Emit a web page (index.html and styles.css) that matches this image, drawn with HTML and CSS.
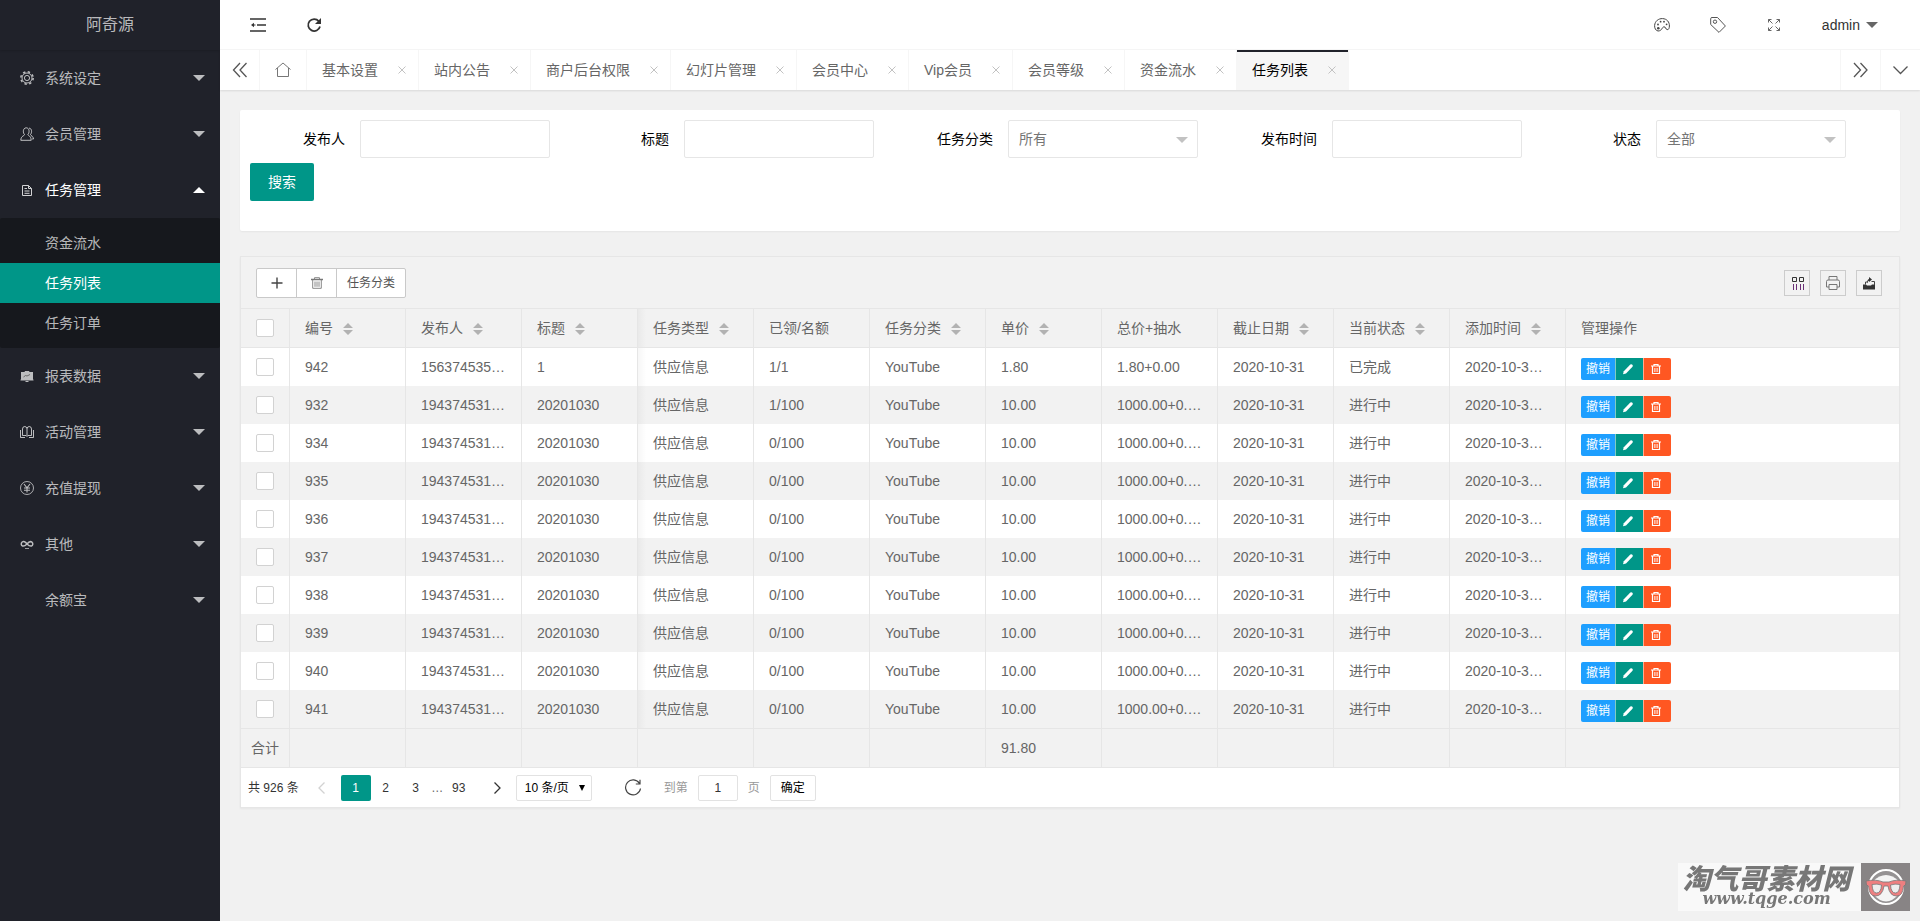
FILE: index.html
```html
<!DOCTYPE html>
<html lang="zh-CN">
<head>
<meta charset="utf-8">
<title>任务列表</title>
<link rel="stylesheet" href="styles.css">
</head>
<body>
<svg class="sprite" aria-hidden="true">
  <symbol id="i-edit" viewBox="0 0 12 12"><path d="M1 11.300 1.800 8.300 8.300 1.600Q9.500.9 10.400 1.700 11.300 2.700 10.500 3.800L4 10.400Z" fill="currentColor"/></symbol>
  <symbol id="i-trash" viewBox="0 0 12 12"><path d="M1 3h10M4 2.800V1.500h4v1.300M2.500 3.200V10.500h7V3.200" fill="none" stroke="currentColor" stroke-width="1.200"/><path d="M4.900 5v4M7.100 5v4" stroke="currentColor"/></symbol>
  <symbol id="i-close" viewBox="0 0 8 8"><path d="M.5.5l7 7M7.500.5l-7 7" fill="none" stroke="currentColor"/></symbol>
</svg>

<div class="app">
  <aside class="side">
    <div class="logo">阿奇源</div>
    <nav class="menu">
      <a class="menu-item" href="#"><svg class="menu-icon" viewBox="0 0 14 14"><g fill="none" stroke="currentColor"><circle cx="7" cy="7" r="2.600"/><circle cx="7" cy="7" r="5"/><circle cx="7" cy="7" r="6.200" stroke-width="1.500" stroke-dasharray="2.400 2.470"/></g></svg><span>系统设定</span><i class="caret"></i></a>
      <a class="menu-item" href="#"><svg class="menu-icon" viewBox="0 0 14 14"><g fill="none" stroke="currentColor"><path d="M4.500 7.500C2.800 6 2.700 1 6.200.8 9.800 1 9.600 6 7.900 7.500 8 9 11 8.500 11.200 13.300H.8C1 8.500 4.400 9.200 4.500 7.500Z"/><path d="M9 1.200c2.800-.2 3.300 4.300 1.500 6.300.3 1.500 2.800 1.500 3 4.500h-1.300"/></g></svg><span>会员管理</span><i class="caret"></i></a>
      <a class="menu-item open" href="#"><svg class="menu-icon dim" viewBox="0 0 14 14"><path d="M2.500 2.500h6l3 3v7h-9zM8.500 2.500v3h3M4.500 5.500h2.500M4.500 8h5M4.500 10.300h5" fill="none" stroke="currentColor"/></svg><span>任务管理</span><i class="caret up"></i></a>
      <div class="submenu">
        <a href="#">资金流水</a>
        <a class="active" href="#">任务列表</a>
        <a href="#">任务订单</a>
      </div>
      <a class="menu-item" href="#"><svg class="menu-icon" viewBox="0 0 14 14"><path d="M1 3h3.500L5 2h4l.5 1H13v7.500h.5v1H.5v-1H1z" fill="currentColor"/><path d="M3.500 8l2-1.500 1.500.5 3-1.500" fill="none" stroke="#555" stroke-width=".8"/><path d="M5.500 12.500h3" stroke="currentColor"/></svg><span>报表数据</span><i class="caret"></i></a>
      <a class="menu-item" href="#"><svg class="menu-icon" viewBox="0 0 14 14"><path d="M7 3.500Q6.500 1.500 4.800 1.500 2.500 1.500 2.500 4V10.500H6L7 11.500 8 10.500h3.500V4Q11.500 1.500 9.200 1.500 7.500 1.500 7 3.500ZM7 3.500v7.500M.5 5v7.500h4.500M13.500 5v7.500H9" fill="none" stroke="currentColor"/></svg><span>活动管理</span><i class="caret"></i></a>
      <a class="menu-item" href="#"><svg class="menu-icon" viewBox="0 0 14 14"><path d="M4 3l3 3.800L10 3M7 6.800V11.500M4 7h6M4 9.200h6" fill="none" stroke="currentColor" stroke-width="1.100"/><circle cx="7" cy="7" r="6.500" fill="none" stroke="currentColor" stroke-width=".9"/></svg><span>充值提现</span><i class="caret"></i></a>
      <a class="menu-item" href="#"><svg class="menu-icon" viewBox="0 0 14 14"><path d="M7 7C5.500 4.500 3.500 4 2.200 5 .8 6.200 1 8.500 2.500 9 4.500 9.500 5.500 8.500 7 7 8.500 5 10 4 11.800 5c1.500 1.200 1.200 3.500-.3 4C9.500 9.500 8.500 8.500 7 7Z" fill="none" stroke="currentColor" stroke-width="1.500"/><path d="M5 11.500h4" stroke="currentColor" stroke-width=".8"/></svg><span>其他</span><i class="caret"></i></a>
      <a class="menu-item" href="#"><span class="menu-icon"></span><span>余额宝</span><i class="caret"></i></a>
    </nav>
  </aside>

  <div class="main">
    <header class="topbar">
      <button class="top-btn" type="button" aria-label="侧边伸缩"><svg width="16" height="16" viewBox="0 0 16 16"><path d="M0 2h16M7 8h9M0 14h16" stroke="#333" stroke-width="1.600"/><path d="M1 8l3-2.200v4.400z" fill="#333"/><path d="M3 8h2.500" stroke="#333"/></svg></button>
      <button class="top-btn wide" type="button" aria-label="刷新"><svg width="16" height="16" viewBox="0 0 16 16"><path d="M12.800 4.200A6 6 0 1 0 14 9.500" fill="none" stroke="#333" stroke-width="1.800"/><path d="M15 1v6H9z" fill="#333"/></svg></button>
      <div class="top-right">
        <button class="top-icon" type="button" aria-label="主题"><svg width="16" height="16" viewBox="0 0 16 16"><path d="M4 14C1.500 13.500.5 11 .6 8.500 1 4 4.500 1.500 8.500 1.600c4.500.2 7 3.400 6.900 7.400 0 2-.8 4-2.200 3.600-2-.4-1.200-2.800-3.200-2.800-2.200.2-1.800 4.200-6 4.200Z" fill="none" stroke="#444"/><g fill="#444"><circle cx="4.300" cy="11.200" r="1.300"/><circle cx="4" cy="7.500" r=".9"/><circle cx="6.600" cy="4.700" r=".9"/><circle cx="10" cy="4.700" r=".9"/><circle cx="12.600" cy="7.300" r=".9"/></g></svg></button>
        <button class="top-icon" type="button" aria-label="便签"><svg width="16" height="16" viewBox="0 0 16 16"><path d="M.7 1.700Q.7.5 2 .5H7.500L15.400 9 9 15.400.7 7.500Z" fill="none" stroke="#555"/><circle cx="5" cy="4.700" r="1.700" fill="none" stroke="#555"/></svg></button>
        <button class="top-icon" type="button" aria-label="全屏"><svg width="16" height="16" viewBox="0 0 16 16"><path d="M2.500 5.500v-3h3M2.500 2.500l4 4M10.500 2.500h3v3M13.500 2.500l-4 4M2.500 10.500v3h3M2.500 13.500l4-4M10.500 13.500h3v-3M13.500 13.500l-4-4" fill="none" stroke="#666"/></svg></button>
        <button class="user" type="button">admin<i class="caret dark"></i></button>
      </div>
    </header>

    <div class="tabs">
      <button class="tab-ctrl" type="button" aria-label="向左"><svg width="16" height="16" viewBox="0 0 16 16"><path d="M8 1 1.500 8 8 15M14.500 1 8 8l6.500 7" fill="none" stroke="#555" stroke-width="1.300"/></svg></button>
      <a class="tab-home" href="#" aria-label="首页"><svg width="16" height="16" viewBox="0 0 16 16"><path d="M.5 7.500 8 1l7.500 6.500M2.500 6v8.500h11V6" fill="none" stroke="#777"/></svg></a>
      <div class="tab"><a href="#">基本设置</a><button type="button" aria-label="关闭"><svg><use href="#i-close"/></svg></button></div>
      <div class="tab"><a href="#">站内公告</a><button type="button" aria-label="关闭"><svg><use href="#i-close"/></svg></button></div>
      <div class="tab"><a href="#">商户后台权限</a><button type="button" aria-label="关闭"><svg><use href="#i-close"/></svg></button></div>
      <div class="tab"><a href="#">幻灯片管理</a><button type="button" aria-label="关闭"><svg><use href="#i-close"/></svg></button></div>
      <div class="tab"><a href="#">会员中心</a><button type="button" aria-label="关闭"><svg><use href="#i-close"/></svg></button></div>
      <div class="tab"><a href="#">Vip会员</a><button type="button" aria-label="关闭"><svg><use href="#i-close"/></svg></button></div>
      <div class="tab"><a href="#">会员等级</a><button type="button" aria-label="关闭"><svg><use href="#i-close"/></svg></button></div>
      <div class="tab"><a href="#">资金流水</a><button type="button" aria-label="关闭"><svg><use href="#i-close"/></svg></button></div>
      <div class="tab current"><a href="#">任务列表</a><button type="button" aria-label="关闭"><svg><use href="#i-close"/></svg></button></div>
      <div class="tab-end">
        <button class="tab-ctrl" type="button" aria-label="向右"><svg width="16" height="16" viewBox="0 0 16 16"><path d="M1 1l6.500 7L1 15M7.500 1 14 8l-6.500 7" fill="none" stroke="#555" stroke-width="1.300"/></svg></button>
        <button class="tab-ctrl" type="button" aria-label="更多"><svg width="16" height="16" viewBox="0 0 16 16"><path d="M.5 4.500l7 7 7-7" fill="none" stroke="#555" stroke-width="1.300"/></svg></button>
      </div>
    </div>

    <main class="content">
      <form class="search">
        <div class="field"><label for="f-user">发布人</label><input id="f-user" type="text"></div>
        <div class="field"><label for="f-title">标题</label><input id="f-title" type="text"></div>
        <div class="field"><label for="f-cat">任务分类</label><div class="select"><select id="f-cat"><option>所有</option></select></div></div>
        <div class="field"><label for="f-time">发布时间</label><input id="f-time" type="text"></div>
        <div class="field"><label for="f-state">状态</label><div class="select"><select id="f-state"><option>全部</option></select></div></div>
        <button class="btn-search" type="button">搜索</button>
      </form>

      <section class="panel">
        <div class="toolbar">
          <div class="btn-group">
            <button type="button" aria-label="添加"><svg width="14" height="14" viewBox="0 0 14 14"><path d="M7 1.500v11M1.500 7h11" stroke="#444" stroke-width="1.400"/></svg></button>
            <button type="button" aria-label="删除"><svg width="12" height="12" viewBox="0 0 12 12"><path d="M0 2.500h12" stroke="#777" stroke-width="1.500"/><path d="M3.500 2V.7h5V2M1.700 3v8.300h8.600V3M4 4.500v5.300M6 4.500v5.300M8 4.500v5.300" fill="none" stroke="#888"/></svg></button>
            <button type="button">任务分类</button>
          </div>
          <div class="tools">
            <button type="button" aria-label="筛选列"><svg width="16" height="16" viewBox="0 0 16 16"><path d="M3.500 2.500h4v4h-4zM10.500 2.500h4v4h-4z" fill="none" stroke="#333"/><path d="M4.500 9v6M7.500 9v6M11.500 9v6M14.500 9v6" stroke="#6a2f76"/></svg></button>
            <button type="button" aria-label="打印"><svg width="16" height="16" viewBox="0 0 16 16"><path d="M4 5V1.500h8V5M4 12H1.500V6.500Q1.500 5 3 5h10q1.500 0 1.500 1.500V12H12M4 9.500h8v5H4z" fill="none" stroke="#777"/></svg></button>
            <button type="button" aria-label="导出"><svg width="16" height="16" viewBox="0 0 16 16"><path d="M2 9.500h3l1 1h4l1-1h3v5H2z" fill="#333"/><path d="M4.500 9.500V7H7M10.500 6.500h3V10" fill="none" stroke="#444"/><path d="M6 8.500q0-4 2-4.500V2l3 2.500L8 7V5.800Q7 6 6 8.500Z" fill="#333"/></svg></button>
          </div>
        </div>

        <table class="grid">
          <colgroup><col class="c-check"><col span="11" class="c-data"><col></colgroup>
          <thead>
            <tr>
              <th class="check"><input type="checkbox" aria-label="全选"></th>
              <th>编号<i class="sort"></i></th><th>发布人<i class="sort"></i></th><th>标题<i class="sort"></i></th><th class="edge">任务类型<i class="sort"></i></th><th>已领/名额</th><th>任务分类<i class="sort"></i></th><th>单价<i class="sort"></i></th><th>总价+抽水</th><th>截止日期<i class="sort"></i></th><th>当前状态<i class="sort"></i></th><th>添加时间<i class="sort"></i></th><th>管理操作</th>
            </tr>
          </thead>
          <tbody>
            <tr><td class="check"><input type="checkbox" aria-label="选择 942"></td><td>942</td><td>156374535888</td><td>1</td><td class="edge">供应信息</td><td>1/1</td><td>YouTube</td><td>1.80</td><td>1.80+0.00</td><td>2020-10-31</td><td>已完成</td><td>2020-10-30 12:00</td><td class="ops"><div><button type="button">撤销</button><button type="button" aria-label="编辑"><svg><use href="#i-edit"/></svg></button><button type="button" aria-label="删除"><svg><use href="#i-trash"/></svg></button></div></td></tr>
            <tr><td class="check"><input type="checkbox" aria-label="选择 932"></td><td>932</td><td>194374531888</td><td>20201030</td><td class="edge">供应信息</td><td>1/100</td><td>YouTube</td><td>10.00</td><td>1000.00+0.00</td><td>2020-10-31</td><td>进行中</td><td>2020-10-30 12:00</td><td class="ops"><div><button type="button">撤销</button><button type="button" aria-label="编辑"><svg><use href="#i-edit"/></svg></button><button type="button" aria-label="删除"><svg><use href="#i-trash"/></svg></button></div></td></tr>
            <tr><td class="check"><input type="checkbox" aria-label="选择 934"></td><td>934</td><td>194374531888</td><td>20201030</td><td class="edge">供应信息</td><td>0/100</td><td>YouTube</td><td>10.00</td><td>1000.00+0.00</td><td>2020-10-31</td><td>进行中</td><td>2020-10-30 12:00</td><td class="ops"><div><button type="button">撤销</button><button type="button" aria-label="编辑"><svg><use href="#i-edit"/></svg></button><button type="button" aria-label="删除"><svg><use href="#i-trash"/></svg></button></div></td></tr>
            <tr><td class="check"><input type="checkbox" aria-label="选择 935"></td><td>935</td><td>194374531888</td><td>20201030</td><td class="edge">供应信息</td><td>0/100</td><td>YouTube</td><td>10.00</td><td>1000.00+0.00</td><td>2020-10-31</td><td>进行中</td><td>2020-10-30 12:00</td><td class="ops"><div><button type="button">撤销</button><button type="button" aria-label="编辑"><svg><use href="#i-edit"/></svg></button><button type="button" aria-label="删除"><svg><use href="#i-trash"/></svg></button></div></td></tr>
            <tr><td class="check"><input type="checkbox" aria-label="选择 936"></td><td>936</td><td>194374531888</td><td>20201030</td><td class="edge">供应信息</td><td>0/100</td><td>YouTube</td><td>10.00</td><td>1000.00+0.00</td><td>2020-10-31</td><td>进行中</td><td>2020-10-30 12:00</td><td class="ops"><div><button type="button">撤销</button><button type="button" aria-label="编辑"><svg><use href="#i-edit"/></svg></button><button type="button" aria-label="删除"><svg><use href="#i-trash"/></svg></button></div></td></tr>
            <tr><td class="check"><input type="checkbox" aria-label="选择 937"></td><td>937</td><td>194374531888</td><td>20201030</td><td class="edge">供应信息</td><td>0/100</td><td>YouTube</td><td>10.00</td><td>1000.00+0.00</td><td>2020-10-31</td><td>进行中</td><td>2020-10-30 12:00</td><td class="ops"><div><button type="button">撤销</button><button type="button" aria-label="编辑"><svg><use href="#i-edit"/></svg></button><button type="button" aria-label="删除"><svg><use href="#i-trash"/></svg></button></div></td></tr>
            <tr><td class="check"><input type="checkbox" aria-label="选择 938"></td><td>938</td><td>194374531888</td><td>20201030</td><td class="edge">供应信息</td><td>0/100</td><td>YouTube</td><td>10.00</td><td>1000.00+0.00</td><td>2020-10-31</td><td>进行中</td><td>2020-10-30 12:00</td><td class="ops"><div><button type="button">撤销</button><button type="button" aria-label="编辑"><svg><use href="#i-edit"/></svg></button><button type="button" aria-label="删除"><svg><use href="#i-trash"/></svg></button></div></td></tr>
            <tr><td class="check"><input type="checkbox" aria-label="选择 939"></td><td>939</td><td>194374531888</td><td>20201030</td><td class="edge">供应信息</td><td>0/100</td><td>YouTube</td><td>10.00</td><td>1000.00+0.00</td><td>2020-10-31</td><td>进行中</td><td>2020-10-30 12:00</td><td class="ops"><div><button type="button">撤销</button><button type="button" aria-label="编辑"><svg><use href="#i-edit"/></svg></button><button type="button" aria-label="删除"><svg><use href="#i-trash"/></svg></button></div></td></tr>
            <tr><td class="check"><input type="checkbox" aria-label="选择 940"></td><td>940</td><td>194374531888</td><td>20201030</td><td class="edge">供应信息</td><td>0/100</td><td>YouTube</td><td>10.00</td><td>1000.00+0.00</td><td>2020-10-31</td><td>进行中</td><td>2020-10-30 12:00</td><td class="ops"><div><button type="button">撤销</button><button type="button" aria-label="编辑"><svg><use href="#i-edit"/></svg></button><button type="button" aria-label="删除"><svg><use href="#i-trash"/></svg></button></div></td></tr>
            <tr><td class="check"><input type="checkbox" aria-label="选择 941"></td><td>941</td><td>194374531888</td><td>20201030</td><td class="edge">供应信息</td><td>0/100</td><td>YouTube</td><td>10.00</td><td>1000.00+0.00</td><td>2020-10-31</td><td>进行中</td><td>2020-10-30 12:00</td><td class="ops"><div><button type="button">撤销</button><button type="button" aria-label="编辑"><svg><use href="#i-edit"/></svg></button><button type="button" aria-label="删除"><svg><use href="#i-trash"/></svg></button></div></td></tr>
          </tbody>
          <tfoot>
            <tr><td class="check total">合计</td><td></td><td></td><td></td><td></td><td></td><td></td><td>91.80</td><td></td><td></td><td></td><td></td><td></td></tr>
          </tfoot>
        </table>

        <div class="pager">
          <span class="count">共 926 条</span>
          <a class="arrow off" href="#" aria-label="上一页"><svg width="12" height="12" viewBox="0 0 12 12"><path d="M8.500.5 3 6l5.500 5.500" fill="none" stroke="currentColor" stroke-width="1.300"/></svg></a>
          <a class="page on" href="#">1</a>
          <a class="page" href="#">2</a>
          <a class="page" href="#">3</a>
          <span class="dots">…</span>
          <a class="page" href="#">93</a>
          <a class="arrow next" href="#" aria-label="下一页"><svg width="12" height="12" viewBox="0 0 12 12"><path d="M3.500.5 9 6l-5.500 5.500" fill="none" stroke="currentColor" stroke-width="1.300"/></svg></a>
          <div class="limit"><select aria-label="每页条数"><option>10 条/页</option></select></div>
          <button class="reload" type="button" aria-label="刷新"><svg width="18" height="18" viewBox="0 0 18 18"><path d="M15.500 4.500A7.500 7.500 0 1 0 16.500 9.500M16 .8V5h-4.200" fill="none" stroke="#444" stroke-width="1.200"/></svg></button>
          <label for="goto">到第</label>
          <input id="goto" type="text" value="1">
          <span class="unit">页</span>
          <button class="go" type="button">确定</button>
        </div>
      </section>
    </main>
  </div>
</div>

<div class="badge">
  <div class="badge-text"><strong>淘气哥素材网</strong><em>www.tqge.com</em></div>
  <svg width="49" height="48" viewBox="0 0 49 48"><rect width="49" height="48" fill="#888485"/><circle cx="25" cy="24" r="17" fill="#959293" stroke="#fff" stroke-width="2"/><path d="M12 18Q25 6 38 18V31Q25 46 12 31Z" fill="#f4f4f4"/><path d="M5 18q10-2 17 1h6q7-3 17-1l-.5 4-2 1q-.5 10-7 10-7 0-8.500-10h-4q-1.500 10-8.500 10-6.500 0-7-10l-2-1Z" fill="#ee7f80" stroke="#777" stroke-width=".8"/><path d="M11 21.500q5-1 9.500.5-.5 8-5 8-4 0-4.500-8.500ZM39 21.500q-5-1-9.500.5.500 8 5 8 4 0 4.500-8.500Z" fill="#eee" stroke="#777" stroke-width=".8"/></svg>
</div>
</body>
</html>
```

FILE: styles.css
```css
* { box-sizing: border-box; }
body {
  margin: 0;
  background: #f1f1f1;
  color: #333;
  font: 14px/24px "Liberation Sans", "Noto Sans CJK SC", sans-serif;
}
a { color: inherit; text-decoration: none; }
button, input, select { font: inherit; color: inherit; margin: 0; }
button { background: none; border: 0; padding: 0; cursor: pointer; }
svg { display: block; flex: none; }
.sprite { position: absolute; width: 0; height: 0; }

.app { display: flex; min-height: 100vh; }

/* sidebar */
.side {
  flex: none;
  width: 220px;
  background: #20222a;
  color: rgba(255, 255, 255, .7);
}
.logo {
  height: 50px;
  line-height: 50px;
  text-align: center;
  font-size: 16px;
  box-shadow: 0 1px 2px rgba(0, 0, 0, .15);
}
.menu-item {
  display: flex;
  align-items: center;
  height: 56px;
  padding: 0 15px 0 20px;
}
.menu-icon { width: 14px; height: 14px; margin-right: 11px; }
.dim { opacity: .8; }
.open { color: #fff; }
.caret {
  margin-left: auto;
  border: 6px solid transparent;
  border-top-color: currentColor;
  border-bottom-width: 0;
}
.caret.up {
  border-top-width: 0;
  border-bottom: 6px solid currentColor;
}
.submenu { padding: 5px 0; background: #16181d; border-radius: 2px; }
.submenu a { display: block; line-height: 40px; padding-left: 45px; }
.submenu .active { background: #009688; color: #fff; }

/* header */
.main { flex: 1; min-width: 0; }
.topbar {
  display: flex;
  align-items: center;
  height: 50px;
  padding: 0 42px 0 30px;
  background: #fff;
  border-bottom: 1px solid #f6f6f6;
}
.top-btn.wide { margin-left: 40px; }
.top-right { display: flex; align-items: center; margin-left: auto; }
.top-icon { margin-right: 40px; }
.user { display: flex; align-items: center; gap: 6px; }
.caret.dark { border-top-color: #666; }

/* tabs */
.tabs {
  display: flex;
  height: 40px;
  background: #fff;
  box-shadow: 0 1px 2px rgba(0, 0, 0, .1);
}
.tab-ctrl, .tab-home {
  display: flex;
  align-items: center;
  justify-content: center;
  width: 40px;
  border-right: 1px solid #f6f6f6;
}
.tab-home { width: 47px; }
.tab {
  display: flex;
  align-items: center;
  gap: 18px;
  padding: 0 10px 0 15px;
  border-right: 1px solid #f6f6f6;
  color: #666;
}
.tab button { padding: 2px; color: #c2c2c2; }
.tab button svg { width: 8px; height: 8px; }
.tab.current {
  background: linear-gradient(#20222a 2px, #f6f6f6 2px);
  color: #000;
}
.tab-end { display: flex; margin-left: auto; }
.tab-end .tab-ctrl { border-right: 0; border-left: 1px solid #f6f6f6; }

/* search form */
.content { padding: 20px; }
.search {
  display: flex;
  flex-wrap: wrap;
  gap: 5px 24px;
  padding: 10px 10px 30px;
  background: #fff;
  border-radius: 2px;
  box-shadow: 0 1px 2px rgba(0, 0, 0, .05);
}
.field { display: flex; align-items: center; color: #000; }
.field label { width: 110px; padding-right: 15px; text-align: right; }
.field input, .select {
  width: 190px;
  height: 38px;
  border: 1px solid #e6e6e6;
  border-radius: 2px;
  background: #fff;
}
.field input { padding: 0 10px; }
.select, .limit { position: relative; }
select { appearance: none; border: 0; outline: 0; background: none; width: 100%; height: 100%; }
.select select { padding: 0 10px; color: #757575; }
.select::after {
  content: "";
  position: absolute;
  right: 9px;
  top: 16px;
  border: 6px solid transparent;
  border-top-color: #c2c2c2;
  border-bottom-width: 0;
  pointer-events: none;
}
.btn-search {
  width: 64px;
  height: 38px;
  border-radius: 2px;
  background: #009688;
  color: #fff;
}

/* table panel */
.panel {
  margin-top: 25px;
  border: 1px solid #e6e6e6;
  background: #fff;
  box-shadow: 0 1px 2px rgba(0, 0, 0, .05);
}
.toolbar {
  display: flex;
  justify-content: space-between;
  padding: 11px 17px 10px 15px;
  background: #f2f2f2;
  border-bottom: 1px solid #e6e6e6;
}
.btn-group { display: flex; border: 1px solid #c9c9c9; border-radius: 2px; background: #fff; }
.btn-group button {
  display: flex;
  align-items: center;
  justify-content: center;
  min-width: 40px;
  height: 28px;
  padding: 0 10px;
  font-size: 12px;
  color: #555;
}
.btn-group button:first-child { min-width: 39px; }
.btn-group button + button { border-left: 1px solid #c9c9c9; }
.tools { display: flex; align-items: center; gap: 10px; }
.tools button { width: 26px; height: 26px; padding: 4px; border: 1px solid #ccc; }

.grid {
  width: 100%;
  table-layout: fixed;
  border-collapse: separate;
  border-spacing: 0;
  color: #666;
}
.c-check { width: 49px; }
.c-data { width: 116px; }
.grid th, .grid td {
  height: 38px;
  padding: 0 15px;
  text-align: left;
  font-weight: 400;
  border-right: 1px solid #e6e6e6;
  overflow: hidden;
  white-space: nowrap;
  text-overflow: ellipsis;
}
.grid th:last-child, .grid td:last-child { border-right: 0; }
.grid th { height: 39px; background-color: #f2f2f2; border-bottom: 1px solid #e6e6e6; }
.grid tbody tr:nth-child(even) { background: #f2f2f2; }
.grid tfoot td { height: 40px; background: #f2f2f2; border: solid #e6e6e6; border-width: 1px 1px 1px 0; }
.grid .edge { background-image: linear-gradient(90deg, rgba(0, 0, 0, .035), transparent 8px); }
.grid .total { padding: 0 10px; }
.grid input {
  appearance: none;
  display: block;
  width: 18px;
  height: 18px;
  border: 1px solid #d2d2d2;
  border-radius: 2px;
  background: #fff;
}
.sort {
  display: inline-block;
  width: 10px;
  height: 12px;
  margin-left: 10px;
  vertical-align: -2px;
  background: #b2b2b2;
  clip-path: polygon(50% 0, 100% 42%, 0 42%, 0 58%, 100% 58%, 50% 100%, 0 58%, 0 42%);
}
.ops div { display: flex; margin-top: 4px; height: 22px; }
.ops button {
  display: flex;
  align-items: center;
  padding: 0 5px;
  font-size: 12px;
  color: #fff;
  background: #1e9fff;
  border-radius: 2px 0 0 2px;
}
.ops button + button {
  width: 28px;
  padding: 0 6px;
  border-left: 1px solid rgba(255, 255, 255, .5);
  background: #009688;
  border-radius: 0;
}
.ops button:last-child { background: #ff5722; border-radius: 0 2px 2px 0; }
.ops svg { width: 12px; height: 12px; }

/* pagination */
.pager {
  display: flex;
  align-items: center;
  height: 39px;
  padding: 0 7px;
  font-size: 12px;
}
.pager .arrow { display: flex; margin-left: 17px; margin-right: 13px; }
.pager .off { color: #d2d2d2; }
.page { min-width: 30px; line-height: 26px; text-align: center; }
.page.on { background: #009688; color: #fff; border-radius: 2px; }
.dots { width: 13px; text-align: center; color: #666; }
.pager .next { margin: 0 13px 0 17px; }
.limit { width: 76px; height: 26px; border: 1px solid #e2e2e2; border-radius: 2px; color: #000; }
.limit select { padding: 0 8px; }
.limit::after {
  content: "";
  position: absolute;
  right: 6px;
  top: 9px;
  border: 3px solid transparent;
  border-top: 6px solid #000;
  border-bottom-width: 0;
  pointer-events: none;
}
.reload { margin: 0 22px 0 32px; }
.pager label, .unit { color: #999; }
.pager input {
  width: 40px;
  height: 26px;
  margin: 0 10px;
  padding: 0;
  text-align: center;
  border: 1px solid #e2e2e2;
  border-radius: 2px;
}
.go {
  width: 46px;
  height: 26px;
  margin-left: 10px;
  border: 1px solid #e2e2e2;
  border-radius: 2px;
  color: #000;
}

/* site badge */
.badge { position: fixed; right: 10px; bottom: 10px; display: flex; }
.badge-text {
  display: flex;
  flex-direction: column;
  align-items: center;
  width: 183px;
  padding-right: 6px;
  background: #f9f9f9;
  color: #777;
}
.badge-text strong { font: italic 900 28px/28px "Noto Sans CJK SC", sans-serif; }
.badge-text em { font: italic 700 16px/16px "DejaVu Serif", serif; }
```
